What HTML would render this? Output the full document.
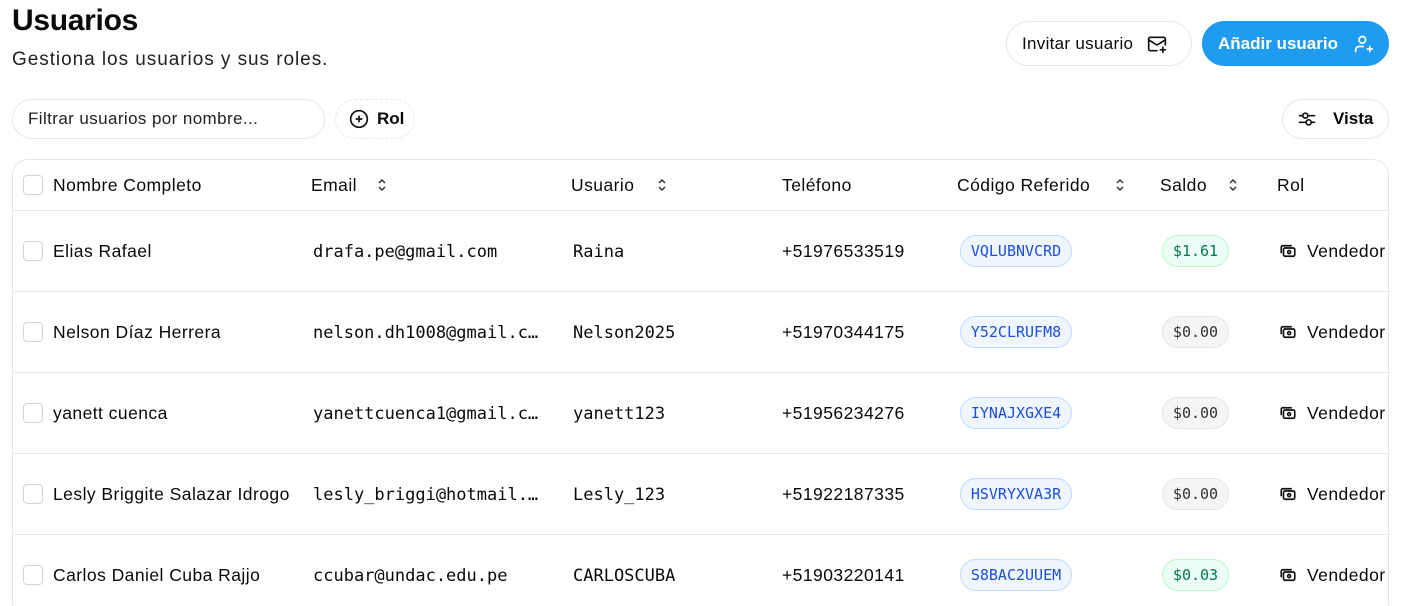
<!DOCTYPE html>
<html><head><meta charset="utf-8"><style>
*{box-sizing:border-box;margin:0;padding:0}
html,body{width:1404px;height:606px;overflow:hidden}
body{background:#fff;font-family:"Liberation Sans",sans-serif;color:#0a0a0a;position:relative}
.abs{position:absolute}
h1{position:absolute;left:12px;top:4px;font-size:30px;font-weight:bold;letter-spacing:-0.3px}
.sub{left:12px;top:49px;font-size:19px;color:#222;letter-spacing:0.95px}
.btn{position:absolute;height:45px;border-radius:23px;border:1px solid #e2e8f0;display:flex;align-items:center;font-size:17px;background:#fff;letter-spacing:0.3px}
.blue{background:#1f9bf0;border-color:#1f9bf0;color:#fff}
.input{left:12px;top:99px;width:313px;height:40px;border:1px solid #e2e8f0;border-radius:20px;font-size:17px;padding-left:15px;display:flex;align-items:center;color:#222;letter-spacing:0.4px}
.rol{left:335px;top:99px;width:80px;height:40px;border:1px dashed #e2e8f0;border-radius:20px;display:flex;align-items:center;font-size:17px;font-weight:bold;gap:8px;padding-left:13px}
.wrap{position:absolute;left:12px;top:159px;width:1377px;height:460px;border:1px solid #e2e8f0;border-radius:16px;overflow:hidden}
.row{position:absolute;left:0;width:1377px;border-top:1px solid #e2e8f0;height:81px}
.c{position:absolute;font-size:17.5px;white-space:nowrap;letter-spacing:0.45px}
.m{font-family:"DejaVu Sans Mono",monospace;font-size:17px;letter-spacing:0}
.cb{position:absolute;left:10px;width:20px;height:20px;border:1px solid #d4d4d8;border-radius:4px}
.code{position:absolute;left:947px;height:32px;width:112px;border-radius:16px;background:#eff6ff;border:1px solid #bfdbfe;color:#1d4ed8;font-family:"DejaVu Sans Mono",monospace;font-size:15px;display:flex;align-items:center;justify-content:center}
.sal{position:absolute;left:1149px;height:32px;width:67px;border-radius:16px;background:#f5f5f5;border:1px solid #e5e5e5;color:#333;font-family:"DejaVu Sans Mono",monospace;font-size:15px;display:flex;align-items:center;justify-content:center}
.g{background:#ecfdf5;border-color:#bbf7d0;color:#047857}
</style></head><body>
<h1>Usuarios</h1>
<div class="abs sub">Gestiona los usuarios y sus roles.</div>
<div class="btn" style="left:1006px;top:21px;width:186px;padding-left:15px">Invitar usuario
<svg style="margin-left:14px" width="20" height="20" viewBox="0 0 24 24" fill="none" stroke="#111" stroke-width="2" stroke-linecap="round" stroke-linejoin="round"><path d="M22 13V6a2 2 0 0 0-2-2H4a2 2 0 0 0-2 2v12a2 2 0 0 0 2 2h8"/><path d="m22 7-8.97 5.7a1.94 1.94 0 0 1-2.06 0L2 7"/><path d="M19 16v6M16 19h6"/></svg></div>
<div class="btn blue" style="left:1202px;top:21px;width:187px;padding-left:15px;font-weight:bold;letter-spacing:0">Añadir usuario
<svg style="margin-left:16px" width="20" height="20" viewBox="0 0 24 24" fill="none" stroke="#fff" stroke-width="2" stroke-linecap="round" stroke-linejoin="round"><circle cx="10" cy="7" r="4"/><path d="M2 21v-2a4 4 0 0 1 4-4h5"/><path d="M19 15v6M16 18h6"/></svg></div>
<div class="abs input">Filtrar usuarios por nombre...</div>
<div class="abs rol"><svg width="20" height="20" viewBox="0 0 24 24" fill="none" stroke="#111" stroke-width="2"><circle cx="12" cy="12" r="10"/><path d="M8 12h8M12 8v8"/></svg>Rol</div>
<div class="btn" style="left:1282px;top:99px;width:107px;height:40px;padding-left:14px;font-weight:bold;gap:16px;letter-spacing:0"><svg width="20" height="20" viewBox="0 0 24 24" fill="none" stroke="#111" stroke-width="2" stroke-linecap="round"><path d="M3 8h4M13 8h8M3 16h8M17 16h4"/><circle cx="10" cy="8" r="3"/><circle cx="14" cy="16" r="3"/></svg>Vista</div>
<div class="wrap">
<div class="row" style="top:0;border-top:none;height:50px">
<div class="cb" style="top:15px"></div>
<div class="c" style="left:40px;top:15px">Nombre Completo</div>
<div class="c" style="left:298px;top:15px">Email</div>
<div class="c" style="left:558px;top:15px">Usuario</div>
<div class="c" style="left:769px;top:15px">Teléfono</div>
<div class="c" style="left:944px;top:15px">Código Referido</div>
<div class="c" style="left:1147px;top:15px">Saldo</div>
<div class="c" style="left:1264px;top:15px">Rol</div>
<svg class="abs" style="left:363px;top:17px" width="12" height="16" viewBox="0 0 12 16" fill="none" stroke="#333" stroke-width="1.5"><path d="M3 6l3-3 3 3M3 10l3 3 3-3"/></svg>
<svg class="abs" style="left:643px;top:17px" width="12" height="16" viewBox="0 0 12 16" fill="none" stroke="#333" stroke-width="1.5"><path d="M3 6l3-3 3 3M3 10l3 3 3-3"/></svg>
<svg class="abs" style="left:1101px;top:17px" width="12" height="16" viewBox="0 0 12 16" fill="none" stroke="#333" stroke-width="1.5"><path d="M3 6l3-3 3 3M3 10l3 3 3-3"/></svg>
<svg class="abs" style="left:1214px;top:17px" width="12" height="16" viewBox="0 0 12 16" fill="none" stroke="#333" stroke-width="1.5"><path d="M3 6l3-3 3 3M3 10l3 3 3-3"/></svg>
</div>

<div class="row" style="top:50px">
<div class="cb" style="top:30px"></div><div class="c" style="left:40px;top:30px">Elias Rafael</div>
<div class="c m" style="left:300px;top:31px">drafa.pe@gmail.com</div><div class="c m" style="left:560px;top:31px">Raina</div>
<div class="c" style="left:769px;top:30px">+51976533519</div>
<div class="code" style="top:24px">VQLUBNVCRD</div><div class="sal g" style="top:24px">$1.61</div>
<svg class="abs" style="left:1266px;top:31px" width="18" height="18" viewBox="0 0 24 24" fill="none" stroke="#111" stroke-width="2.2"><rect x="6" y="8" width="15" height="11" rx="2"/><path d="M3 15V7a2 2 0 0 1 2-2h12"/><circle cx="13.5" cy="13.5" r="2"/></svg>
<div class="c" style="left:1294px;top:30px">Vendedor</div></div>

<div class="row" style="top:131px">
<div class="cb" style="top:30px"></div><div class="c" style="left:40px;top:30px">Nelson Díaz Herrera</div>
<div class="c m" style="left:300px;top:31px">nelson.dh1008@gmail.c…</div><div class="c m" style="left:560px;top:31px">Nelson2025</div>
<div class="c" style="left:769px;top:30px">+51970344175</div>
<div class="code" style="top:24px">Y52CLRUFM8</div><div class="sal" style="top:24px">$0.00</div>
<svg class="abs" style="left:1266px;top:31px" width="18" height="18" viewBox="0 0 24 24" fill="none" stroke="#111" stroke-width="2.2"><rect x="6" y="8" width="15" height="11" rx="2"/><path d="M3 15V7a2 2 0 0 1 2-2h12"/><circle cx="13.5" cy="13.5" r="2"/></svg>
<div class="c" style="left:1294px;top:30px">Vendedor</div></div>

<div class="row" style="top:212px">
<div class="cb" style="top:30px"></div><div class="c" style="left:40px;top:30px">yanett cuenca</div>
<div class="c m" style="left:300px;top:31px">yanettcuenca1@gmail.c…</div><div class="c m" style="left:560px;top:31px">yanett123</div>
<div class="c" style="left:769px;top:30px">+51956234276</div>
<div class="code" style="top:24px">IYNAJXGXE4</div><div class="sal" style="top:24px">$0.00</div>
<svg class="abs" style="left:1266px;top:31px" width="18" height="18" viewBox="0 0 24 24" fill="none" stroke="#111" stroke-width="2.2"><rect x="6" y="8" width="15" height="11" rx="2"/><path d="M3 15V7a2 2 0 0 1 2-2h12"/><circle cx="13.5" cy="13.5" r="2"/></svg>
<div class="c" style="left:1294px;top:30px">Vendedor</div></div>

<div class="row" style="top:293px">
<div class="cb" style="top:30px"></div><div class="c" style="left:40px;top:30px">Lesly Briggite Salazar Idrogo</div>
<div class="c m" style="left:300px;top:31px">lesly_briggi@hotmail.…</div><div class="c m" style="left:560px;top:31px">Lesly_123</div>
<div class="c" style="left:769px;top:30px">+51922187335</div>
<div class="code" style="top:24px">HSVRYXVA3R</div><div class="sal" style="top:24px">$0.00</div>
<svg class="abs" style="left:1266px;top:31px" width="18" height="18" viewBox="0 0 24 24" fill="none" stroke="#111" stroke-width="2.2"><rect x="6" y="8" width="15" height="11" rx="2"/><path d="M3 15V7a2 2 0 0 1 2-2h12"/><circle cx="13.5" cy="13.5" r="2"/></svg>
<div class="c" style="left:1294px;top:30px">Vendedor</div></div>

<div class="row" style="top:374px">
<div class="cb" style="top:30px"></div><div class="c" style="left:40px;top:30px">Carlos Daniel Cuba Rajjo</div>
<div class="c m" style="left:300px;top:31px">ccubar@undac.edu.pe</div><div class="c m" style="left:560px;top:31px">CARLOSCUBA</div>
<div class="c" style="left:769px;top:30px">+51903220141</div>
<div class="code" style="top:24px">S8BAC2UUEM</div><div class="sal g" style="top:24px">$0.03</div>
<svg class="abs" style="left:1266px;top:31px" width="18" height="18" viewBox="0 0 24 24" fill="none" stroke="#111" stroke-width="2.2"><rect x="6" y="8" width="15" height="11" rx="2"/><path d="M3 15V7a2 2 0 0 1 2-2h12"/><circle cx="13.5" cy="13.5" r="2"/></svg>
<div class="c" style="left:1294px;top:30px">Vendedor</div></div>
</div>
</body></html>
